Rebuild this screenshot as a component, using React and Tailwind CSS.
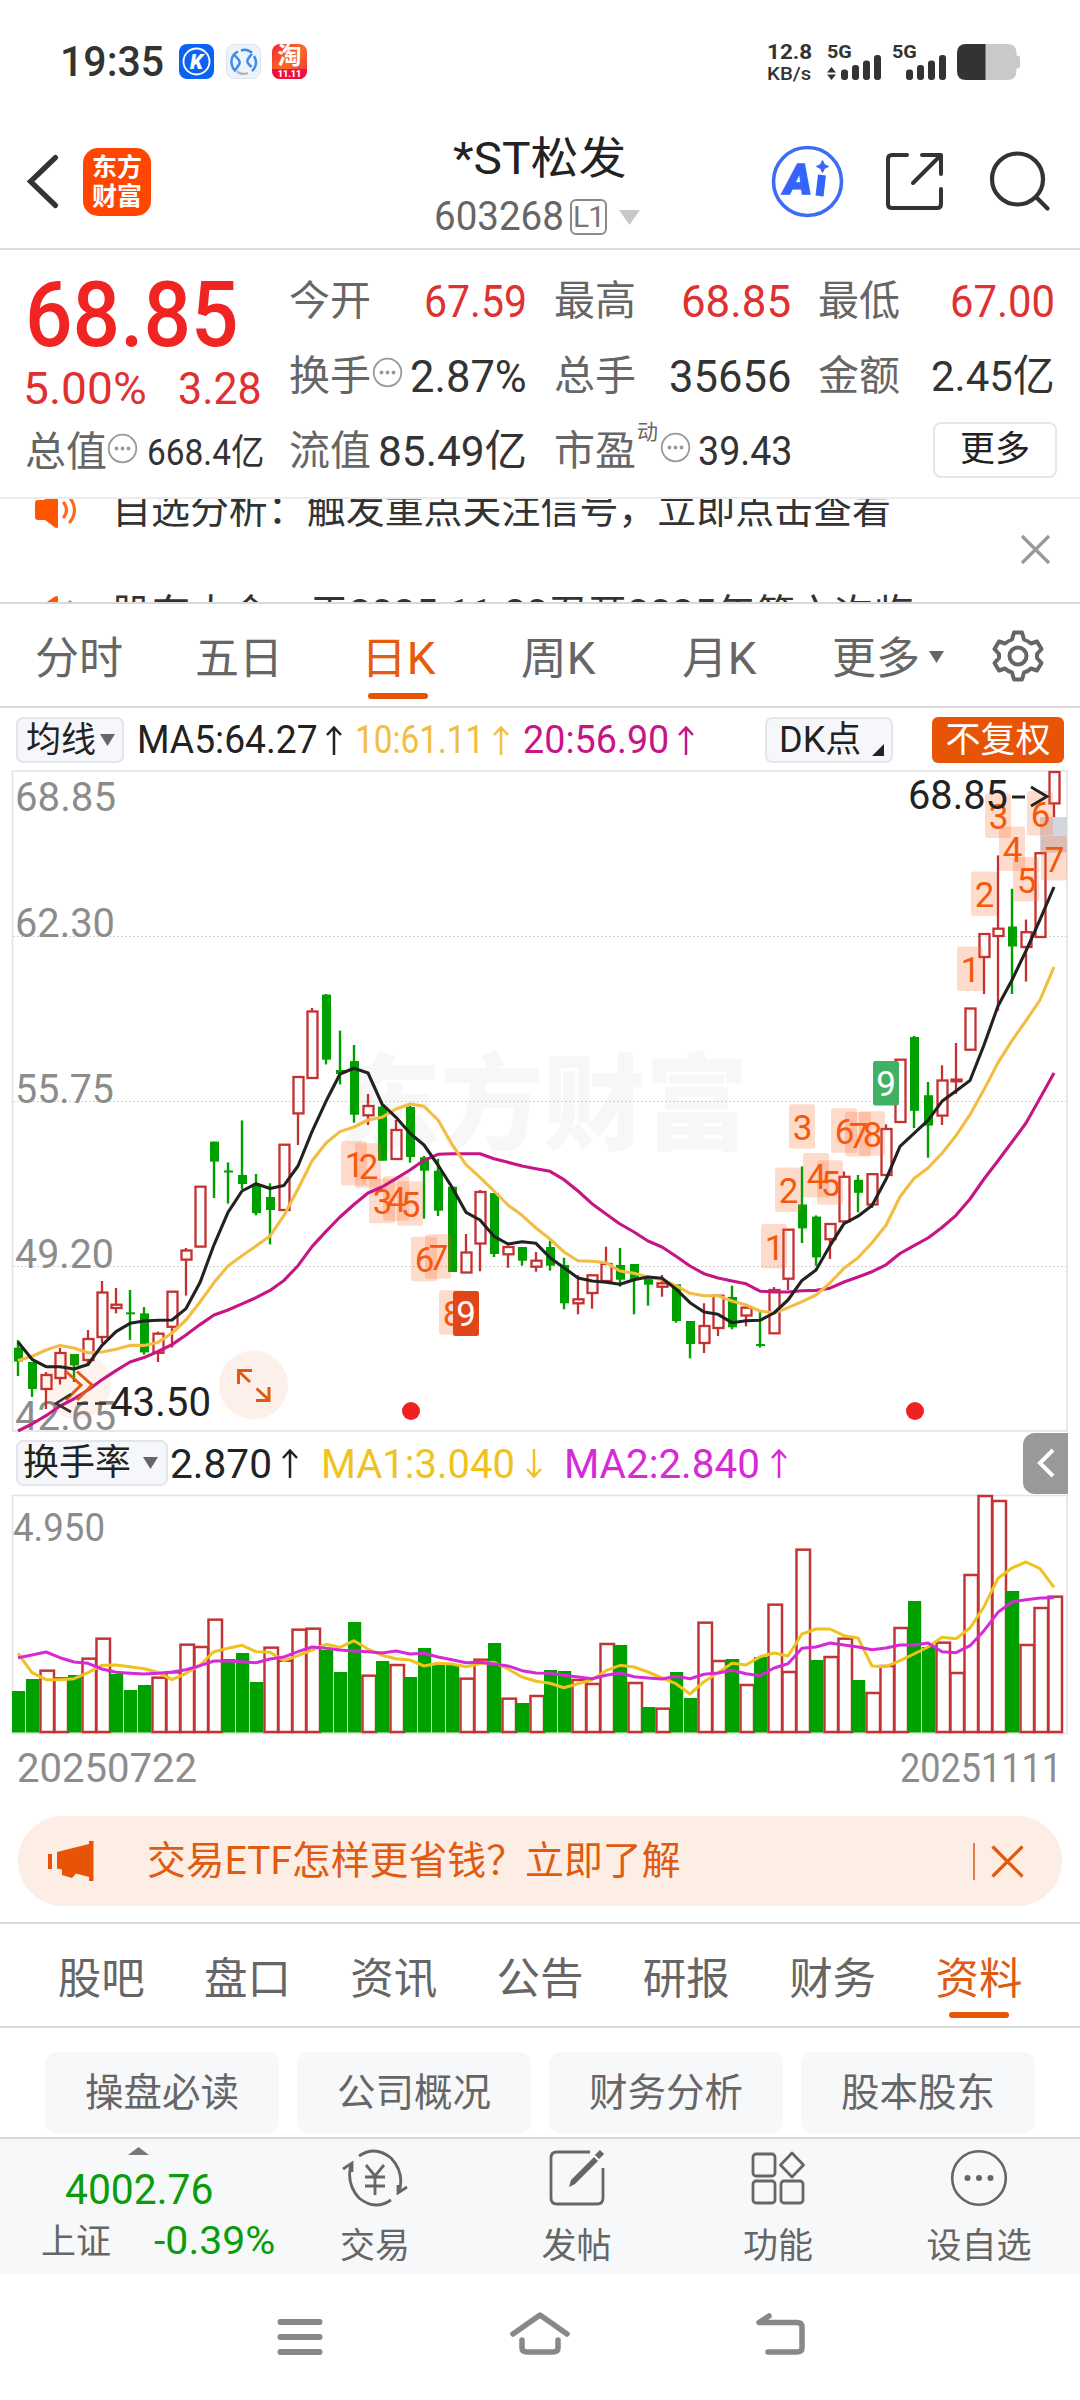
import React, { useLayoutEffect, useRef, useState } from "react";

/* Text squeezed or stretched horizontally to an exact width. */
function Fit({ w, className = "", children }) {
  const ref = useRef(null);
  const [scale, setScale] = useState(1);
  useLayoutEffect(() => {
    if (ref.current) setScale(w / ref.current.offsetWidth);
  }, [w]);
  return (
    <span className={"inline-block shrink-0 whitespace-nowrap leading-none " + className} style={{ width: w }}>
      <span ref={ref} className="inline-block origin-left whitespace-nowrap" style={{ transform: `scaleX(${scale})` }}>
        {children}
      </span>
    </span>
  );
}

/* Candles: [up, high, bodyTop, bodyBottom, low] in chart pixels. */
const candles = [
  [0, 1340, 1347.6, 1361.5, 1376], [0, 1362, 1362, 1389, 1397], [1, 1372, 1375, 1389, 1409], [1, 1348, 1353, 1378, 1384.5],
  [0, 1354, 1354, 1365.4, 1382], [1, 1330, 1339, 1360, 1366], [1, 1281, 1292.5, 1337, 1343], [1, 1288, 1304.7, 1308, 1313.4],
  [0, 1290, 1312.3, 1314.3, 1340], [0, 1307, 1313.4, 1352.4, 1354.6], [1, 1331.6, 1333.7, 1352.8, 1362], [1, 1291.7, 1291.7, 1326.8, 1347.6],
  [1, 1248, 1250.5, 1259.6, 1295.6], [1, 1186.7, 1186.7, 1246.6, 1246.6], [0, 1141.6, 1141.6, 1161.6, 1198], [0, 1162.4, 1170.5, 1172.5, 1203.6],
  [0, 1120.4, 1175, 1184, 1189.3], [0, 1174, 1184, 1213.2, 1215.3], [0, 1183.3, 1197, 1210, 1244.4], [1, 1144.7, 1144.7, 1210, 1210],
  [1, 1077, 1077, 1113.4, 1145], [1, 1008, 1011.5, 1078, 1078], [0, 994, 994.6, 1059.7, 1064.4], [0, 1030.6, 1070, 1074, 1084.4],
  [0, 1045, 1061, 1114.7, 1122.7], [1, 1094, 1106, 1115.3, 1125], [0, 1105, 1106.7, 1160.7, 1160.7], [1, 1120, 1130, 1159, 1159],
  [0, 1105.7, 1107, 1157, 1162.7], [0, 1156, 1157.3, 1170.7, 1218.7], [0, 1158.7, 1170.7, 1210.7, 1216], [0, 1186.7, 1186.7, 1272, 1272],
  [1, 1234, 1252.5, 1272.5, 1272.5], [1, 1190, 1192, 1243.5, 1271.3], [0, 1193, 1193, 1254, 1257], [1, 1245.5, 1247, 1254.3, 1267.7],
  [0, 1247, 1247, 1260.7, 1265.7], [1, 1252, 1260.7, 1266.7, 1271.7], [0, 1240.7, 1247, 1265.7, 1270.7], [0, 1257.7, 1265, 1303.3, 1309.3],
  [1, 1275.3, 1299.3, 1303.3, 1314.3], [1, 1275.3, 1275.3, 1293, 1308.7], [1, 1246.7, 1264, 1281, 1281], [0, 1248, 1265, 1279.7, 1286.7],
  [0, 1264, 1264, 1280, 1314.3], [0, 1278, 1278, 1284.7, 1305.7], [1, 1275, 1283.3, 1286.7, 1296.7], [0, 1284.3, 1284.3, 1321, 1322.7],
  [0, 1321, 1321, 1344, 1358.3], [1, 1303.3, 1326, 1343, 1353], [1, 1295.7, 1295.7, 1328, 1336], [0, 1285.7, 1297, 1327.3, 1329.3],
  [1, 1304.7, 1307.7, 1315.5, 1326.4], [0, 1310.8, 1344, 1346, 1347.6], [1, 1287, 1290, 1333.3, 1333.3], [1, 1229.7, 1229.7, 1278.7, 1290],
  [0, 1166.4, 1204.5, 1228.4, 1243], [0, 1215.4, 1216.6, 1257.4, 1265.7], [1, 1224, 1224, 1239.2, 1259], [1, 1171.5, 1176.8, 1221.4, 1221.4],
  [0, 1175, 1179.8, 1192.8, 1212.3], [1, 1174.2, 1174.2, 1204.5, 1208], [1, 1124.3, 1129, 1175, 1175], [1, 1059.7, 1059.7, 1122, 1122],
  [0, 1036, 1037, 1110.8, 1128], [0, 1082, 1095.2, 1125.6, 1157.7], [1, 1065.3, 1080.5, 1115.6, 1125], [1, 1043, 1079.6, 1081.3, 1094],
  [1, 1008.5, 1008.5, 1049.7, 1049.7], [1, 934, 934, 957, 994], [1, 855.4, 928.7, 936, 1010.7], [0, 888.8, 926.5, 946.5, 994],
  [1, 919.6, 932.2, 947, 981.6], [1, 853.2, 853.2, 937, 937], [1, 772, 772, 803.4, 817],
];
const ma5 = [1342, 1359.3, 1366.7, 1366.7, 1369, 1364.5, 1345.4, 1331.6, 1323.3, 1321, 1320.3, 1320, 1308.6, 1282.6, 1244.8, 1212.3, 1191, 1183.7, 1188.5, 1185.4, 1166, 1131.6, 1101.3, 1074, 1068.3, 1073, 1104, 1117.3, 1133.3, 1145, 1165, 1187.3, 1212.3, 1220, 1236.3, 1244, 1241.7, 1243.3, 1257.7, 1267.7, 1278, 1281, 1282.3, 1284.3, 1279.7, 1277, 1278.3, 1289, 1302.7, 1312, 1314.3, 1322.7, 1320.7, 1320.3, 1313, 1300, 1280.4, 1270, 1245.7, 1223.6, 1216.2, 1205.4, 1179.3, 1146.4, 1133.4, 1120.4, 1101.3, 1091, 1080.5, 1045, 1006, 980, 950.8, 919.6, 887];
const ma10 = [1360.6, 1356.3, 1350, 1345.4, 1348, 1352.8, 1352, 1349.3, 1345.4, 1345.4, 1342.4, 1333, 1320, 1302, 1282.6, 1266, 1255.7, 1246, 1236, 1215.3, 1189, 1161, 1143, 1131.6, 1127, 1120, 1117.3, 1109, 1104, 1106.3, 1120, 1144.3, 1164.7, 1177.3, 1191, 1205, 1215.3, 1228, 1239, 1252, 1260.7, 1261.3, 1262.7, 1271, 1273.3, 1277, 1279.7, 1285.7, 1293.3, 1295.7, 1295.7, 1301, 1305, 1311, 1313, 1307.7, 1301.6, 1295, 1283, 1268.3, 1257.8, 1242.7, 1225.3, 1196.7, 1178.5, 1168, 1153.3, 1135.6, 1114.7, 1089.6, 1062.7, 1040.6, 1020.6, 1000, 966.9];
const ma20 = [1431, 1424, 1415.7, 1406, 1398.8, 1390, 1379.7, 1370.6, 1362, 1357.6, 1351.5, 1344.6, 1335, 1324.6, 1315, 1310, 1303.8, 1297.7, 1290.4, 1280.4, 1265.7, 1246.6, 1231.4, 1217, 1204.5, 1193, 1187, 1178.7, 1170, 1160.3, 1154.3, 1153.7, 1153.7, 1153.7, 1158.7, 1162.3, 1166, 1168.7, 1171.3, 1179.7, 1191, 1203.7, 1214, 1224, 1232, 1241, 1247, 1256.3, 1266, 1273.7, 1278, 1281, 1283.8, 1291.2, 1292, 1292, 1290.8, 1290.4, 1288.2, 1282, 1277, 1271.7, 1264.8, 1253.5, 1245.7, 1238, 1227.5, 1215.3, 1199, 1179, 1160.7, 1142, 1123, 1098.3, 1073];

/* Turnover bars: offset of the top in thirds of a pixel below 1420; negative marks a falling day. */
const bars = [-813, -777, 752, 775, -765, 716, 656, -762, -810, -795, 773, 757, 674, 681, 599, -717, -699, -786, 683, 722, 629, 626, -690, -756, -606, 767, -723, 735, -771, -684, -732, -735, 776, 719, -669, 836, -849, 828, -750, -753, 780, 792, 672, -675, 789, -861, 866, -756, -834, 608, 723, -717, 795, -711, 554, 756, 389, -720, 711, 656, -780, 819, 738, 624, -543, -681, 668, 759, 465, 228, 243, -513, 675, 564, 530];
const vma1 = [700, 758, 779, 779, 776, 758, 736, 735, 740, 746, 757, 779, 760, 735, 695, 685, 676, 695, 697, 722, 707, 690, 673, 682, 662, 687, 706, 716, 720, 738, 730, 732, 740, 731, 727, 747, 771, 784, 790, 803, 791, 779, 752, 736, 741, 756, 774, 791, 822, 785, 758, 730, 735, 710, 699, 708, 642, 627, 627, 647, 654, 738, 740, 722, 702, 681, 652, 656, 624, 560, 475, 444, 426, 446, 502];
const vma2 = [713, 705, 696, 713, 726, 730, 747, 757, 760, 762, 760, 756, 749, 737, 723, 723, 725, 728, 717, 711, 695, 681, 685, 690, 693, 695, 699, 693, 702, 700, 711, 719, 728, 727, 732, 738, 752, 759, 760, 766, 771, 776, 766, 759, 770, 774, 777, 769, 776, 763, 759, 751, 761, 767, 744, 731, 685, 681, 669, 675, 681, 689, 684, 675, 675, 669, 695, 698, 677, 632, 577, 546, 539, 534, 533];
const X = (i) => 18 + 14 * i;
const line = (a) => a.map((y, i) => `${X(i)},${y}`).join(" ");
const vline = (a) => a.map((y, i) => `${X(i)},${(1420 + y / 3).toFixed(1)}`).join(" ");

/* Sequence markers: [digit, x, y]. */
const tags = [
  [1, 341, 1141], [2, 355, 1143.3], [3, 369, 1178.7], [4, 383, 1176.3], [5, 397, 1181.3], [6, 411, 1236.7], [7, 425, 1234.3], [8, 439, 1290.3],
  [1, 761, 1224], [2, 775, 1167.6], [3, 789, 1104.3], [4, 803, 1153], [5, 817, 1160.3], [6, 831, 1108.2], [7, 845, 1112], [8, 859, 1111.3],
  [1, 957, 946.5], [2, 971, 871.5], [3, 985, 793.4], [4, 999, 826.4], [5, 1013, 857], [6, 1027, 791], [7, 1041, 836],
];

function Label({ x, y, w, size = 41, fill = "#8c8c8c", children }) {
  return (
    <text x={x} y={y} fontSize={size} fill={fill} textLength={w} lengthAdjust="spacingAndGlyphs">
      {children}
    </text>
  );
}

function PriceChart() {
  return (
    <svg className="block h-[662px] w-[1080px] shrink-0" viewBox="0 770 1080 662">
      <text x="338" y="1142" fontSize="104" fontWeight="900" fill="#f7f7f7" textLength="410" lengthAdjust="spacingAndGlyphs">东方财富</text>
      {[936.5, 1101.5, 1266.5].map((y) => (
        <line key={y} x1="13" x2="1067" y1={y} y2={y} stroke="#d2d2d2" strokeDasharray="2 2" />
      ))}
      <rect x="12.5" y="771" width="1054.5" height="660" fill="none" stroke="#e3e3e3" strokeWidth="1.6" />
      <Label x={15} y={811} w={101}>68.85</Label>
      <Label x={15} y={937} w={100}>62.30</Label>
      <Label x={15} y={1103} w={99}>55.75</Label>
      <Label x={15} y={1268} w={99}>49.20</Label>
      <Label x={15} y={1429.5} w={101}>42.65</Label>
      <rect x="1040" y="817" width="27" height="35.5" fill="#d3d7dd" />
      {candles.map(([up, h, t, b, l], i) => {
        const x = X(i);
        return up ? (
          <g key={i} stroke="#c53030" strokeWidth="2.3" fill="none">
            {h < t && <line x1={x} x2={x} y1={h} y2={t} />}
            {l > b && <line x1={x} x2={x} y1={b} y2={l} />}
            <rect x={x - 4.5} y={t} width="10" height={b - t} />
          </g>
        ) : (
          <g key={i} fill="#00a000">
            <rect x={x - 1.2} y={h} width="2.400" height={l - h} />
            <rect x={x - 4} y={t} width="9" height={b - t} />
          </g>
        );
      })}
      <circle cx="77" cy="1385" r="34" fill="#e8570c" fillOpacity="0.08" />
      <circle cx="253.5" cy="1385" r="34.5" fill="#fdf0ea" />
      {tags.map(([n, x, y], i) => (
        <g key={i}>
          <rect x={x} y={y} width="26" height="44.5" rx="2.5" fill="#ff6a2a" fillOpacity="0.24" />
          <text x={x + 13.5} y={y + 35.5} fontSize="35" fill="#f5580c" textAnchor="middle">{n}</text>
        </g>
      ))}
      <g fontSize="35" fill="#fff" textAnchor="middle">
        <rect x="453" y="1291" width="26" height="45" rx="2.5" fill="#e04618" />
        <text x="466" y="1326">9</text>
        <rect x="873" y="1061" width="26" height="44.5" rx="2.5" fill="#40b064" />
        <text x="886" y="1096">9</text>
      </g>
      <g fill="none" strokeWidth="3.1" strokeLinejoin="round">
        <polyline points={line(ma20)} stroke="#c71585" />
        <polyline points={line(ma10)} stroke="#f2bd42" />
        <polyline points={line(ma5)} stroke="#222" />
      </g>
      <g fill="none" stroke="#e05a10" strokeWidth="3">
        <path d="M66 1371.500L81 1385L66 1400M77 1371.500L92 1385L77 1400" />
        <path d="M250 1382L238.500 1371M238.500 1384V1370.500H252M256.500 1388.500L269 1400M256 1400.500H269V1387" />
      </g>
      <path d="M71 1394L56 1403.500L71 1412M77 1403.500H88M95 1403.500H106" fill="none" stroke="#333" strokeWidth="2.6" />
      <Label x={110} y={1415.5} w={101} fill="#222">43.50</Label>
      <Label x={908} y={808.5} w={100} fill="#222">68.85</Label>
      <path d="M1012 797H1025M1031 787L1047 796.500L1031 806" fill="none" stroke="#222" strokeWidth="2.8" />
      <circle cx="411" cy="1411" r="9" fill="#ef2222" />
      <circle cx="915" cy="1411" r="9" fill="#ef2222" />
    </svg>
  );
}

function TurnoverChart() {
  return (
    <svg className="block h-[306px] w-[1080px] shrink-0" viewBox="0 1494 1080 306">
      <rect x="12.500" y="1495.500" width="1054.500" height="238" fill="none" stroke="#e3e3e3" strokeWidth="1.600" />
      <Label x={13} y={1541} w={92} size={39}>4.950</Label>
      {bars.map((v, i) => {
        const top = 1420 + Math.abs(v) / 3;
        return v > 0 ? (
          <rect key={i} x={X(i) - 5.5} y={top} width="13.500" height={1732 - top} fill="#fff" stroke="#c53434" strokeWidth="2.500" />
        ) : (
          <rect key={i} x={X(i) - 6} y={top} width="13.200" height={1732.5 - top} fill="#00a000" />
        );
      })}
      <g fill="none" strokeWidth="3" strokeLinejoin="round">
        <polyline points={vline(vma1)} stroke="#efc31d" />
        <polyline points={vline(vma2)} stroke="#d62ad6" />
      </g>
      <Label x={17} y={1781.5} w={180} size={41}>20250722</Label>
      <Label x={900} y={1781.5} w={162} size={41}>20251111</Label>
    </svg>
  );
}

const Tri = ({ className, c = "#666", w = 15, h = 12 }) => (
  <svg className={"shrink-0 " + className} width={w} height={h} viewBox="0 0 10 10" preserveAspectRatio="none">
    <path d="M0 0H10L5 10Z" fill={c} />
  </svg>
);
const Arrow = ({ className, c, down }) => (
  <svg className={"shrink-0 " + className + (down ? " rotate-180" : "")} width="16" height="29" viewBox="0 0 16 29" fill="none" stroke={c} strokeWidth="2.500">
    <path d="M8 29V2M1 9L8 1.500L15 9" />
  </svg>
);
const Info = ({ className = "" }) => (
  <svg className={"shrink-0 " + className} width="31" height="31" viewBox="0 0 31 31" fill="#999">
    <circle cx="15.500" cy="15.500" r="13.800" fill="none" stroke="#999" strokeWidth="1.800" />
    <circle cx="9.500" cy="15.500" r="1.900" /><circle cx="15.500" cy="15.500" r="1.900" /><circle cx="21.500" cy="15.500" r="1.900" />
  </svg>
);
const Speaker = () => (
  <svg className="ml-[33px] shrink-0" width="46" height="38" viewBox="0 0 46 38">
    <path d="M2 12q0-3 3-3h6L22 1.500q3-1.500 3 1.500v32q0 3-3 1.500L12 29H5q-3 0-3-3z" fill="#ff5500" />
    <path d="M31 12q5 7 0 14M37 7q9 12 0 24" fill="none" stroke="#ff6a1a" strokeWidth="3.200" strokeLinecap="round" />
  </svg>
);
const Signal = () => (
  <svg width="40" height="26" viewBox="0 0 40 26" fill="#333">
    <rect x="0" y="15.500" width="7" height="10.500" rx="3" /><rect x="11" y="11" width="7" height="15" rx="3" />
    <rect x="22" y="6.500" width="7" height="19.500" rx="3" /><rect x="33" y="1" width="7" height="25" rx="3" />
  </svg>
);

function StatusBar() {
  return (
    <div className="flex h-[112px] shrink-0 items-start pt-[44px]">
      <Fit w={104} className="ml-[60px] -mt-[4px] text-[43px] font-medium text-[#333]">19:35</Fit>
      <svg className="ml-[15px]" width="35" height="35" viewBox="0 0 35 35">
        <rect width="35" height="35" rx="8" fill="#0b63f6" />
        <circle cx="17.500" cy="17.500" r="13" fill="none" stroke="#fff" strokeWidth="1.800" />
        <text x="17.500" y="25" fontSize="21" fontWeight="900" fontStyle="italic" fill="#fff" textAnchor="middle">K</text>
      </svg>
      <svg className="ml-[12px]" width="35" height="35" viewBox="0 0 35 35">
        <rect x=".5" y=".5" width="34" height="34" rx="8" fill="#edf3fa" stroke="#dde3ea" />
        <path d="M12 7.500Q5 11 5.500 18.500Q6 24 9 26.500L13 20.500Q14.500 18 12.500 15.500L8.500 11M15 6.500Q21 4 26 9M28 12Q31 17 29.500 21.500Q28.500 25 26 27M26 9.500L22 15Q20.500 17.500 22.500 20L25.500 23" fill="none" stroke="#3d8bea" strokeWidth="2.500" />
        <path d="M11 27.500Q16 31.500 22 29" fill="none" stroke="#b9b3ba" strokeWidth="2.300" />
      </svg>
      <div className="ml-[11px] flex h-[35px] w-[35px] flex-col items-center overflow-hidden rounded-[8px] bg-gradient-to-br from-[#ee1a2c] via-[#fb6a24] to-[#ef1040] text-white">
        <span className="text-[24px] font-bold leading-[25px]">淘</span>
        <span className="w-full bg-[#f01040] text-center text-[9px] font-black leading-[10px]">11.11</span>
      </div>
      <div className="ml-[460px] flex w-[45px] flex-col text-[#333]">
        <Fit w={45} className="-mt-[2px] text-[21px] font-bold">12.8</Fit>
        <Fit w={44} className="mt-[1px] text-[19px] font-medium">KB/s</Fit>
      </div>
      <div className="ml-[15px] flex flex-col text-[#333]">
        <Fit w={25} className="-mt-[2px] text-[19px] font-bold">5G</Fit>
        <div className="-mt-[7px] flex items-end">
          <svg width="9" height="13" viewBox="0 0 9 13" fill="#333"><path d="M0 5.500L4.500 0L9 5.500ZM0 7.500L4.500 13L9 7.500Z" /></svg>
          <span className="w-[5px]" /><Signal />
        </div>
      </div>
      <div className="ml-[11px] flex flex-col text-[#333]">
        <Fit w={25} className="-mt-[2px] text-[19px] font-bold">5G</Fit>
        <div className="-mt-[7px] ml-[14px] flex"><Signal /></div>
      </div>
      <svg className="ml-[11px]" width="64" height="36" viewBox="0 0 64 36">
        <path d="M28 0H50Q59.500 0 59.500 9V11.500H60Q63 11.500 63 14V22Q63 24.500 60 24.500H59.500V27Q59.500 36 50 36H28Z" fill="#c9c9c9" />
        <path d="M9 0H28.500V36H9Q0 36 0 27V9Q0 0 9 0" fill="#333" />
      </svg>
    </div>
  );
}

function Header() {
  return (
    <div className="flex h-[138px] shrink-0 items-start border-b-2 border-[#dcdcdc]">
      <svg className="ml-[25px] mt-[41px] shrink-0" width="36" height="57" viewBox="0 0 36 57" fill="none" stroke="#333" strokeWidth="5.200"><path d="M30.500 4.500L5.500 28.500L30.500 52.500" strokeLinecap="round" /></svg>
      <div className="ml-[22px] mt-[36px] flex h-[68px] w-[68px] shrink-0 flex-col items-center justify-center rounded-[15px] bg-[#ff4600] text-[25px] font-bold leading-[29px] text-white">
        <span>东方</span><span>财富</span>
      </div>
      <div className="ml-[283px] mt-[25px] flex w-[213px] flex-col">
        <Fit w={173} className="ml-[19px] text-[44px] text-[#222]">*ST松发</Fit>
        <div className="mt-[16px] flex items-center">
          <Fit w={130} className="text-[40px] text-[#666]">603268</Fit>
          <span className="ml-[6px] flex h-[36px] w-[37px] items-center justify-center rounded-[6px] border-2 border-[#8a8a8a] text-[30px] leading-none tracking-[-1px] text-[#777]">L1</span>
          <Tri className="ml-[12px]" c="#c8c8c8" w={21} h={15} />
        </div>
      </div>
      <svg className="ml-[124px] mt-[33px] shrink-0" width="73" height="73" viewBox="0 0 73 73">
        <circle cx="36.500" cy="36.500" r="34" fill="#fff" stroke="#3f6cf5" strokeWidth="3.600" />
        <text x="13" y="49" fontSize="42" fontWeight="900" fontStyle="italic" fill="#3464fa" stroke="#3464fa" strokeWidth="1.500">A</text>
        <path d="M50.500 34L49 47" stroke="#3464fa" strokeWidth="8" strokeLinecap="square" />
        <path d="M51.500 15.500Q52.500 20.500 57.500 21.500Q52.500 22.500 51.500 27.500Q50.500 22.500 45.500 21.500Q50.500 20.500 51.500 15.500" fill="#3464fa" stroke="#3464fa" />
      </svg>
      <svg className="ml-[41px] mt-[39px] shrink-0" width="61" height="62" viewBox="0 0 61 62" fill="none" stroke="#333" strokeWidth="4" strokeLinecap="round" strokeLinejoin="round">
        <path d="M22 4H7Q3 4 3 8V53Q3 57 7 57H52Q56 57 56 53V38M37 4H56V23M55 5L28 32" />
      </svg>
      <svg className="ml-[43px] mt-[38px] shrink-0" width="64" height="64" viewBox="0 0 64 64" fill="none" stroke="#333" strokeWidth="4.200" strokeLinecap="round"><circle cx="28.500" cy="29" r="25.500" /><path d="M47 47L58.500 58.500" /></svg>
    </div>
  );
}

const Key = ({ children }) => <span className="w-[82px] shrink-0 text-[41px] leading-none text-[#666]">{children}</span>;

function Quote() {
  return (
    <div className="flex h-[249px] shrink-0 gap-[27px] border-b-2 border-[#ececec] pl-[25px] pt-[14px]">
      <div className="flex w-[237px] flex-col">
        <Fit w={214} className="mt-[7px] text-[90px] font-medium text-[#f12424]">68.85</Fit>
        <div className="mt-[5px] flex h-[45px] items-center justify-between text-[45px] text-[#e03030]">
          <Fit w={124} className="-ml-[2px]">5.00%</Fit><Fit w={84}>3.28</Fit>
        </div>
        <div className="mt-[4px] flex h-[75px] items-center">
          <Key>总值</Key><Info className="-mt-[8px]" /><Fit w={117} className="ml-[9px] text-[36px] text-[#333]">668.4亿</Fit>
        </div>
      </div>
      <div className="grid h-[225px] w-[766px] grid-cols-[238px_237px_237px] grid-rows-3 gap-x-[27px] text-[45px] text-[#333]">
        <div className="flex items-center justify-between"><Key>今开</Key><Fit w={103} className="text-[#e03030]">67.59</Fit></div>
        <div className="flex items-center justify-between"><Key>最高</Key><Fit w={110} className="text-[#e03030]">68.85</Fit></div>
        <div className="flex items-center justify-between"><Key>最低</Key><Fit w={105} className="text-[#e03030]">67.00</Fit></div>
        <div className="flex items-center"><Key>换手</Key><Info className="-mt-[8px] ml-[1px]" /><Fit w={117} className="ml-[7px]">2.87%</Fit></div>
        <div className="flex items-center justify-between"><Key>总手</Key><Fit w={122}>35656</Fit></div>
        <div className="flex items-center justify-between"><Key>金额</Key><Fit w={124} className="text-[43px]">2.45亿</Fit></div>
        <div className="flex items-center justify-between"><Key>流值</Key><Fit w={149} className="text-[43px]">85.49亿</Fit></div>
        <div className="flex items-center">
          <Key>市盈</Key>
          <span className="-mt-[38px] ml-px text-[21px] leading-none text-[#666]">动</span>
          <Info className="ml-[2px] -mt-[8px]" /><Fit w={94} className="ml-[7px] text-[40px]">39.43</Fit>
        </div>
        <div className="flex items-center justify-end">
          <span className="-mr-[2px] -mt-[4px] flex h-[56px] w-[124px] items-center justify-center rounded-[8px] border-2 border-[#e6e6e6] text-[35px] leading-none text-[#222]">更多</span>
        </div>
      </div>
    </div>
  );
}

function Notices() {
  return (
    <div className="flex h-[105px] shrink-0 border-b-2 border-[#d9d9d9]">
      <div className="flex h-[103px] w-[1000px] flex-col overflow-hidden text-[38.5px] leading-none text-[#333]">
        <div className="-mt-[8px] flex h-[38px] shrink-0 items-center"><Speaker /><Fit w={779} className="ml-[33px]">自选分析：触发重点关注信号，立即点击查看</Fit></div>
        <div className="mt-[66px] flex h-[38px] shrink-0 items-center"><Speaker /><Fit w={801} className="ml-[33px]">股东大会：于2025-11-20召开2025年第六次临</Fit></div>
      </div>
      <svg className="ml-[20px] mt-[35px]" width="31" height="31" viewBox="0 0 31 31" stroke="#999" strokeWidth="3.200"><path d="M2 2L29 29M29 2L2 29" /></svg>
    </div>
  );
}

function PeriodTabs() {
  return (
    <div className="flex h-[104px] shrink-0 items-start border-b-2 border-[#d9d9d9] pt-[33px] text-[44px] leading-none text-[#666]">
      <span className="ml-[35px] w-[160px]">分时</span>
      <span className="w-[166px]">五日</span>
      <span className="flex w-[160px] flex-col text-[#e85a0c]"><Fit w={75}>日K</Fit><span className="ml-[7px] mt-[12px] h-[6px] w-[60px] rounded-full bg-[#e85405]" /></span>
      <span className="w-[161px]"><Fit w={75}>周K</Fit></span>
      <span className="w-[150px]"><Fit w={75}>月K</Fit></span>
      <span>更多</span>
      <Tri className="ml-[9px] mt-[14px]" />
      <svg className="-mt-[8px] ml-[47px] shrink-0" width="54" height="54" viewBox="0 0 54 54" fill="none" stroke="#666" strokeWidth="4" strokeLinejoin="round">
        <path d="M23 3.500H31L33 10.500Q37 12 40 14.500L46 12.500L50.500 20L46 25V29L50.500 34L46 41.500L40 39.500Q37 42.500 33 43.500L31 50.500H23L21 43.500Q17 42.500 14 39.500L8 41.500L3.500 34L8 29V25L3.500 20L8 12.500L14 14.500Q17 12 21 10.500Z" />
        <circle cx="27" cy="27" r="8.500" />
      </svg>
    </div>
  );
}

const Pill = ({ className = "", children }) => (
  <span className={"flex h-[46px] shrink-0 items-center rounded-[7px] border-2 border-[#e4e5ea] bg-[#f6f7fa] leading-none text-[#222] " + className}>{children}</span>
);

export default function App() {
  return (
    <div className="flex h-[2400px] w-[1080px] flex-col overflow-hidden bg-white font-[Roboto,'Noto_Sans_CJK_SC',sans-serif]">
      <StatusBar />
      <Header />
      <Quote />
      <Notices />
      <PeriodTabs />

      <div className="flex h-[62px] shrink-0 items-center pt-[2px] text-[38.5px] leading-none">
        <Pill className="ml-[16px] w-[108px] text-[35px]"><span className="ml-[8px]">均线</span><Tri className="ml-[4px]" /></Pill>
        <Fit w={181} className="ml-[13px] text-[#222]">MA5:64.27</Fit><Arrow className="ml-[8px]" c="#222" />
        <Fit w={129} className="ml-[13px] text-[#f2bd42]">10:61.11</Fit><Arrow className="ml-[9px]" c="#f2bd42" />
        <Fit w={146} className="ml-[14px] text-[#c71585]">20:56.90</Fit><Arrow className="ml-[9px]" c="#c71585" />
        <Pill className="ml-[71px] w-[128px] text-[36px]">
          <Fit w={82} className="ml-[12px]">DK点</Fit>
          <svg className="ml-[11px] mt-[20px]" width="12" height="12" viewBox="0 0 12 12"><path d="M12 0V12H0Z" fill="#222" /></svg>
        </Pill>
        <span className="ml-[39px] flex h-[46px] w-[132px] shrink-0 items-center justify-center rounded-[6px] bg-[#e85405] text-[35px] text-white">不复权</span>
      </div>

      <PriceChart />

      <div className="flex h-[62px] shrink-0 items-center text-[41px] leading-none">
        <Pill className="ml-[16px] w-[152px] text-[36px]"><Fit w={108} className="ml-[5px]">换手率</Fit><Tri className="ml-[12px]" /></Pill>
        <Fit w={102} className="ml-[2px] mt-[2px] text-[#222]">2.870</Fit><Arrow className="ml-[10px]" c="#222" />
        <Fit w={194} className="ml-[23px] mt-[2px] text-[#efc31d]">MA1:3.040</Fit><Arrow className="ml-[11px]" c="#efc31d" down />
        <Fit w={196} className="ml-[22px] mt-[2px] text-[#d62ad6]">MA2:2.840</Fit><Arrow className="ml-[11px]" c="#d62ad6" />
        <span className="ml-[236px] flex h-[61px] w-[45px] shrink-0 items-center justify-center rounded-l-[12px] bg-[#999]">
          <svg width="18" height="30" viewBox="0 0 18 30" fill="none" stroke="#fff" strokeWidth="4"><path d="M16 2L3 15L16 28" /></svg>
        </span>
      </div>

      <TurnoverChart />

      <div className="mx-[18px] mt-[16px] flex h-[90px] shrink-0 items-center rounded-full bg-[#fceee5] text-[38.500px] leading-none text-[#e05a10]">
        <svg className="ml-[30px] shrink-0" width="46" height="40" viewBox="0 0 46 40" fill="#e85405">
          <path d="M0 13H4V28H0ZM9 11L41 3V0H45.500V40H41V36L28 32.500L24 37L14 34V28.500L9 27.500Z" />
        </svg>
        <Fit w={534} className="ml-[53px]">交易ETF怎样更省钱？立即了解</Fit>
        <span className="ml-[292px] h-[37px] w-[2px] bg-[#e08050]" />
        <svg className="ml-[16px]" width="33" height="33" viewBox="0 0 33 33" stroke="#e05a10" strokeWidth="3.300"><path d="M1.500 1.500L31.500 31.500M31.500 1.500L1.500 31.500" /></svg>
      </div>

      <div className="mt-[16px] flex h-[106px] shrink-0 border-y-2 border-[#dadadc] pl-[28px] text-[43.500px] leading-none text-[#666]">
        {["股吧", "盘口", "资讯", "公告", "研报", "财务"].map((t) => (
          <span key={t} className="w-[146.300px] pt-[34px] text-center">{t}</span>
        ))}
        <span className="flex w-[146.300px] flex-col items-center pt-[34px] text-[#e05a10]">资料<span className="mt-[10px] h-[6px] w-[60px] rounded-full bg-[#e85405]" /></span>
      </div>

      <div className="flex h-[111px] shrink-0 gap-[18px] border-b-2 border-[#d6d8da] pl-[45px] pt-[24px]">
        {["操盘必读", "公司概况", "财务分析", "股本股东"].map((t) => (
          <span key={t} className="flex h-[81px] w-[234px] items-center justify-center rounded-[12px] bg-[#f7f8fa] pt-[2px] text-[38.500px] leading-none text-[#666]">{t}</span>
        ))}
      </div>

      <div className="flex h-[135px] shrink-0 bg-[#f7f8fa] text-[35px] leading-none text-[#666]">
        <div className="flex w-[275px] flex-col pl-[41px]">
          <Tri className="ml-[87px] mt-[8px] rotate-180" c="#777" w={21} h={8} />
          <Fit w={148} className="ml-[24px] mt-[13px] text-[43px] text-[#0a9c0a]">4002.76</Fit>
          <div className="mt-[9px] flex items-center justify-between"><span className="pt-[3px]">上证</span><Fit w={121} className="mt-[2px] text-[39px] text-[#0a9c0a]">-0.39%</Fit></div>
        </div>
        <div className="flex w-[200px] flex-col items-center pt-[10px]">
          <svg width="66" height="58" viewBox="0 0 66 58" fill="none" stroke="#666" strokeWidth="2.800">
            <path d="M17 7Q33-4 49 9Q63 24 57 43M49 51Q33 62 17 49Q4 35 9 15" />
            <path d="M1 20L10 14V23M65 38L56 44V36" />
            <path d="M24 16L33 27L42 16M33 27V46M23 28H43M23 37H43" />
          </svg>
          <span className="mt-[22px]">交易</span>
        </div>
        <div className="flex w-[203px] flex-col items-center pt-[10px]">
          <svg width="58" height="58" viewBox="0 0 58 58" fill="none" stroke="#666" strokeWidth="2.800">
            <path d="M42 3H9Q3 3 3 9V49Q3 55 9 55H49Q55 55 55 49V19" />
            <path d="M21 38L23 31L46 8L50 12L27 35Z" fill="#666" stroke="none" />
            <path d="M49 8L54 3" strokeWidth="6" />
          </svg>
          <span className="mt-[22px]">发帖</span>
        </div>
        <div className="flex w-[200px] flex-col items-center pt-[10px]">
          <svg width="58" height="58" viewBox="0 0 58 58" fill="none" stroke="#666" strokeWidth="2.800">
            <rect x="4" y="5" width="22" height="22" rx="3" /><rect x="4" y="32" width="22" height="22" rx="3" /><rect x="32" y="32" width="22" height="22" rx="3" />
            <path d="M43 4L54.500 16L43 28L31.500 16Z" strokeLinejoin="round" />
          </svg>
          <span className="mt-[22px]">功能</span>
        </div>
        <div className="flex w-[202px] flex-col items-center pt-[10px]">
          <svg width="58" height="58" viewBox="0 0 58 58" fill="#666"><circle cx="29" cy="29" r="26.800" fill="none" stroke="#666" strokeWidth="2.600" /><circle cx="17.500" cy="29" r="3" /><circle cx="29" cy="29" r="3" /><circle cx="40.500" cy="29" r="3" /></svg>
          <span className="mt-[22px]">设自选</span>
        </div>
      </div>

      <div className="flex h-[126px] shrink-0 items-start pt-[36px]">
        <svg className="ml-[275px]" width="50" height="50" viewBox="0 0 50 50" stroke="#888" strokeWidth="6" strokeLinecap="round"><path d="M5.500 12H44.500M5.500 27H44.500M5.500 42H44.500" /></svg>
        <svg className="ml-[184px]" width="62" height="50" viewBox="0 0 62 50" fill="none" stroke="#888" strokeWidth="5.500" strokeLinecap="round" strokeLinejoin="round"><path d="M4 24L31 5L58 24M13 30V38Q13 42 18 42H44Q49 42 49 38V30" /></svg>
        <svg className="ml-[183px]" width="52" height="50" viewBox="0 0 52 50" fill="none" stroke="#888" strokeWidth="5.500" strokeLinecap="round" strokeLinejoin="round"><path d="M15 6L5 12.500H43Q48 12.500 48 17V38Q48 42 43 42H14" /></svg>
      </div>
    </div>
  );
}
